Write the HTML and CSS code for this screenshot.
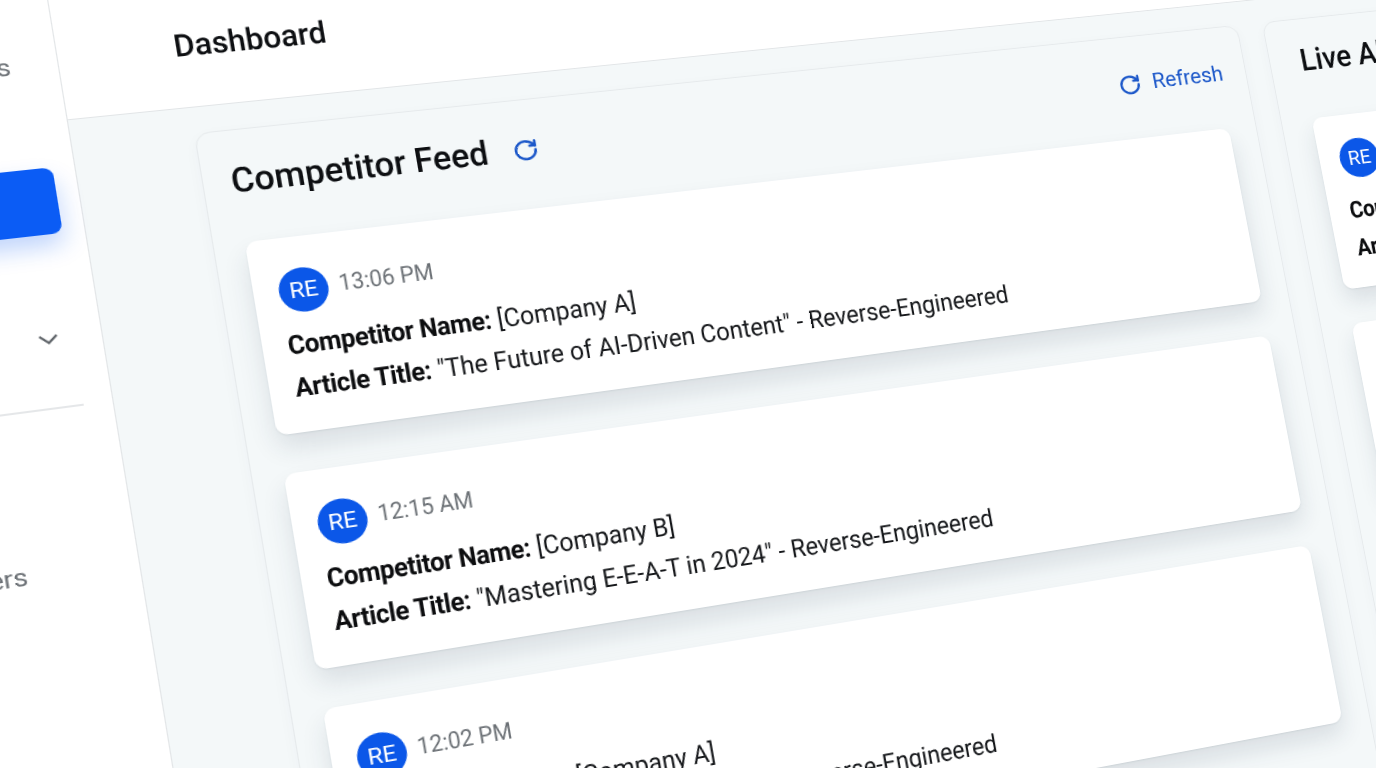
FILE: index.html
```html
<!DOCTYPE html>
<html lang="en">
<head>
  <meta charset="UTF-8">
  <title>Dashboard</title>
  <link rel="stylesheet" href="styles.css">
</head>
<body>
  <div class="page">
    <div class="sidebar">
      <div class="nav-item nav-top">Competitor Ads</div>
      <div class="nav-item active">Feeds</div>
      <div class="nav-item">Alerts</div>
      <div class="nav-item">Tools
        <svg class="chevron" viewBox="0 0 18 10"><path d="M1.5 1.5L9 8.5l7.5-7"/></svg>
      </div>
      <div class="divider"></div>
      <div class="nav-item">Analytics</div>
      <div class="nav-item">Publishers</div>
    </div>

    <div class="main">
      <div class="header">
        <h1 class="title">Dashboard</h1>
      </div>

      <div class="content">
        <div class="panel feed-panel">
          <div class="panel-head">
            <h2 class="panel-title">Competitor Feed</h2>
            <svg class="icon refresh-small" viewBox="0 0 24 24"><path d="M21 12a9 9 0 1 1-9-9c2.52 0 4.93 1 6.74 2.74L21 8"/><path d="M21 3v5h-5"/></svg>
            <div class="refresh">
              <svg class="icon" viewBox="0 0 24 24"><path d="M21 12a9 9 0 1 1-9-9c2.52 0 4.93 1 6.74 2.74L21 8"/><path d="M21 3v5h-5"/></svg>
              <span>Refresh</span>
            </div>
          </div>

          <div class="card">
            <div class="card-top"><div class="avatar">RE</div><span class="time">13:06 PM</span></div>
            <div class="line"><b>Competitor Name:</b> [Company A]</div>
            <div class="line"><b>Article Title:</b> "The Future of AI-Driven Content" - Reverse-Engineered</div>
          </div>

          <div class="card">
            <div class="card-top"><div class="avatar">RE</div><span class="time">12:15 AM</span></div>
            <div class="line"><b>Competitor Name:</b> [Company B]</div>
            <div class="line"><b>Article Title:</b> "Mastering E-E-A-T in 2024" - Reverse-Engineered</div>
          </div>

          <div class="card">
            <div class="card-top"><div class="avatar">RE</div><span class="time">12:02 PM</span></div>
            <div class="line"><b>Competitor Name:</b> [Company A]</div>
            <div class="line"><b>Article Title:</b> "The State of AI Search" - Reverse-Engineered</div>
          </div>
        </div>

        <div class="panel live-panel">
          <div class="panel-head">
            <h2 class="panel-title">Live Alerts</h2>
          </div>

          <div class="card">
            <div class="card-top"><div class="avatar">RE</div><span class="time">13:06 PM</span></div>
            <div class="line"><b>Competitor Name:</b> [Company A]</div>
            <div class="line"><b>Article Title:</b> New Article</div>
          </div>

          <div class="card">
            <div class="card-top"><div class="avatar">RE</div><span class="time">12:15 AM</span></div>
            <div class="line"><b>Competitor Name:</b> [Company B]</div>
            <div class="line"><b>Article Title:</b> New Article</div>
          </div>
        </div>
      </div>
    </div>
  </div>
</body>
</html>
```

FILE: styles.css
```css
html, body {
  margin: 0;
  height: 100%;
  overflow: hidden;
  background-color: #f4f8f9;
  font-family: 'Roboto', sans-serif;
}

/* the whole app is laid out flat, then tilted to match the angled shot */
.page {
  display: flex;
  width: 2300px;
  height: 1300px;
  background-color: #f4f8f9;
  transform-origin: 0 0;
  transform: matrix3d(1.13508, -0.10011, 0, 0.00011658, 0.15742, 0.97223, 0, -0.00002419, 0, 0, 1, 0, 246, 243, 0, 1) translate(-500px, -300px);
}

.sidebar {
  width: 362px;
  flex-shrink: 0;
  box-sizing: border-box;
  padding: 67px 19px 0 133px;
  display: flex;
  flex-direction: column;
  gap: 2px;
  background-color: #fff;
  border-right: 1.5px solid #e2e5e7;
}

.nav-item {
  height: 66px;
  padding: 0 18px 0 20px;
  display: flex;
  align-items: center;
  flex-shrink: 0;
  font-size: 24px;
  color: #6b7075;
  white-space: nowrap;
}

.nav-top {
  margin-bottom: 68px;
}

.nav-item.active {
  background-color: #0b5cf5;
  border-radius: 9px;
  color: #fff;
  box-shadow: 0 12px 22px rgba(11, 92, 245, 0.25);
}

.chevron {
  width: 18px;
  height: 10px;
  margin-left: auto;
  fill: none;
  stroke: #5f6469;
  stroke-width: 2.2;
}

.divider {
  height: 1.5px;
  margin: 32px 6px 55px 0;
  background-color: #e5e7e9;
  flex-shrink: 0;
}

.main {
  flex: 1;
  display: flex;
  flex-direction: column;
}

.header {
  height: 158px;
  box-sizing: border-box;
  padding: 77px 0 0 103px;
  background-color: #fff;
  border-bottom: 1.5px solid #e2e5e7;
}

/* headings and body text read narrower in the shot than the tilt makes them */
.title {
  margin: 0;
  font-size: 31.5px;
  line-height: 36px;
  font-weight: 500;
  color: #0d0f12;
  transform: scaleX(0.91);
  transform-origin: left;
}

.content {
  display: flex;
  gap: 28px;
  padding: 26px 0 0 108px;
}

.panel {
  box-sizing: border-box;
  border: 1.5px solid #e6eaec;
  border-radius: 14px;
  background-color: #f4f8f9;
  box-shadow: 0 4px 14px rgba(40, 60, 80, 0.03);
}

.feed-panel {
  width: 1052px;
  padding: 0 30px 40px 28px;
}

.live-panel {
  width: 560px;
  padding: 0 30px 40px 34px;
}

.panel-head {
  height: 114px;
  box-sizing: border-box;
  padding-top: 31px;
  display: flex;
  align-items: flex-start;
}

.panel-title {
  margin: 0 0 0 -3px;
  font-size: 35px;
  line-height: 42px;
  font-weight: 500;
  color: #0d0f12;
  transform: scaleX(0.915);
  transform-origin: left;
}

.live-panel .panel-title {
  margin: -4px 0 0 0;
}

.icon {
  width: 25px;
  height: 25px;
  fill: none;
  stroke: #1b57c9;
  stroke-width: 2.4;
  stroke-linecap: round;
  stroke-linejoin: round;
  flex-shrink: 0;
}

.refresh-small {
  margin: 9px 0 0 1px;
}

.refresh {
  margin: 0 -5px 0 auto;
  display: flex;
  align-items: center;
  gap: 12px;
  font-size: 23px;
  line-height: 26px;
  color: #1b57c9;
  padding-top: 9px;
}

.card {
  height: 197px;
  box-sizing: border-box;
  padding: 32px 22px 0 23px;
  margin-bottom: 39px;
  background-color: #fff;
  border-radius: 11px;
  box-shadow: 0 1px 2px rgba(30, 50, 70, 0.08), 0 14px 24px rgba(30, 50, 70, 0.12);
}

.card-top {
  display: flex;
  align-items: center;
  gap: 10px;
  margin-bottom: 10px;
}

.live-panel .card-top {
  margin: -4px 0 14px;
}

.avatar {
  width: 45px;
  height: 45px;
  border-radius: 50%;
  background-color: #0b57e8;
  color: #fff;
  font-size: 22px;
  display: flex;
  justify-content: center;
  align-items: center;
}

.time {
  font-size: 23.5px;
  color: #6b7075;
  margin-top: -6px;
  transform: scaleX(0.88);
  transform-origin: left;
}

.line {
  font-size: 26.5px;
  line-height: 43px;
  color: #16181b;
  white-space: nowrap;
  transform: scaleX(0.89);
  transform-origin: left;
}

.line b {
  font-weight: 700;
  letter-spacing: -0.4px;
  color: #0c0d0f;
}
```
